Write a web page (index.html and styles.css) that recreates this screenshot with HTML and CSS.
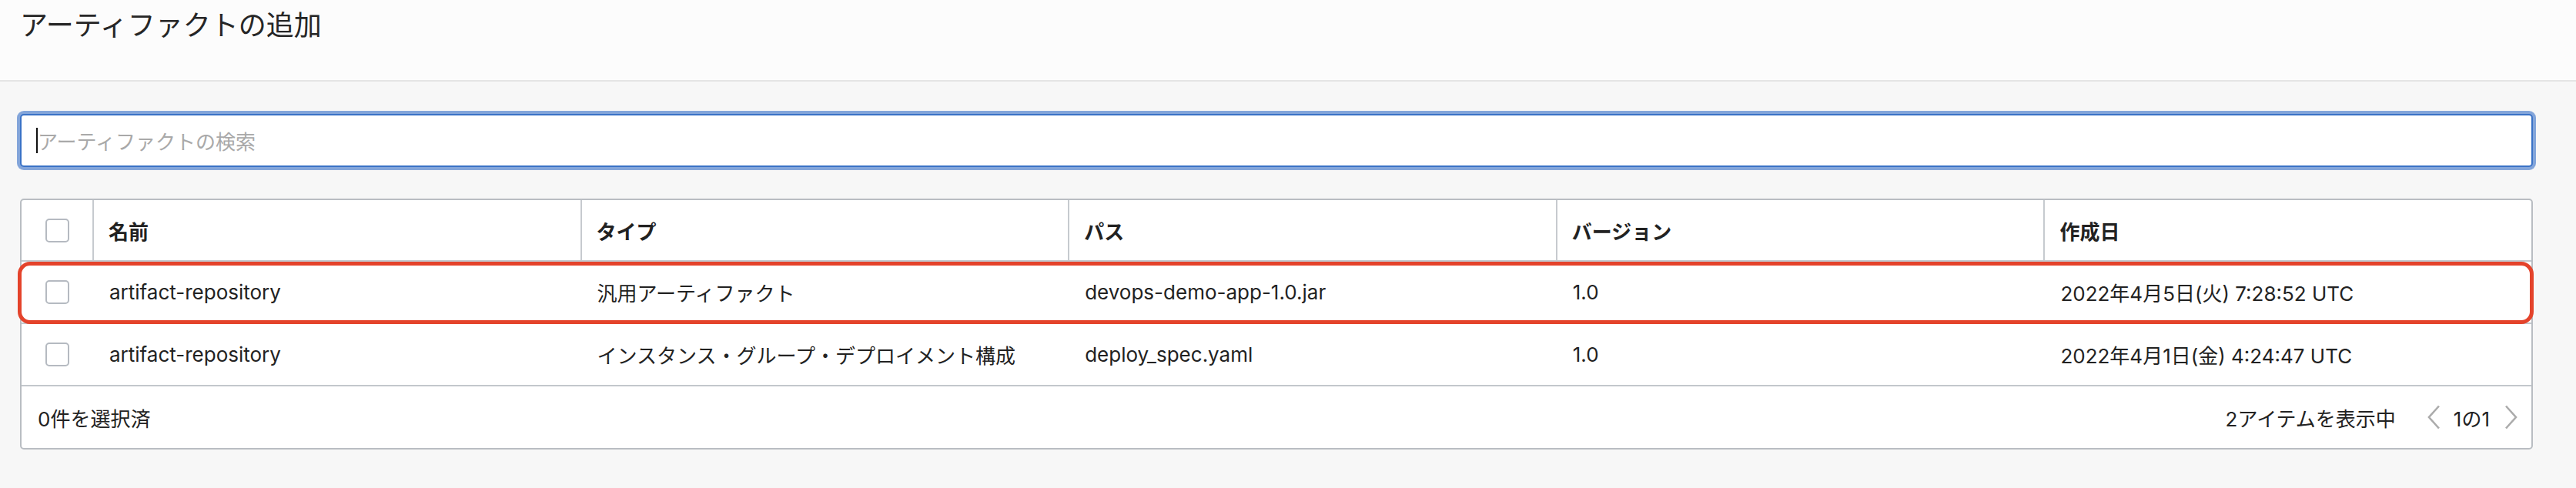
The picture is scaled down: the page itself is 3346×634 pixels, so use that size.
FILE: index.html
```html
<!DOCTYPE html>
<html lang="ja">
<head>
<meta charset="utf-8">
<title>アーティファクトの追加</title>
<link rel="stylesheet" href="styles.css">
</head>
<body>
<header class="page-header">
  <h1 class="page-title">アーティファクトの追加</h1>
</header>
<main class="content">
  <div class="search" role="searchbox">
    <span class="caret"></span><span class="placeholder">アーティファクトの検索</span>
  </div>
  <div class="table">
    <div class="row head">
      <div class="cell check"><span class="box"></span></div>
      <div class="cell th">名前</div>
      <div class="cell th">タイプ</div>
      <div class="cell th">パス</div>
      <div class="cell th">バージョン</div>
      <div class="cell th">作成日</div>
    </div>
    <div class="row body highlighted">
      <div class="cell check"><span class="box"></span></div>
      <div class="cell">artifact-repository</div>
      <div class="cell">汎用アーティファクト</div>
      <div class="cell">devops-demo-app-1.0.jar</div>
      <div class="cell">1.0</div>
      <div class="cell">2022年4月5日(火) 7:28:52 UTC</div>
      <span class="mark"></span>
    </div>
    <div class="row body">
      <div class="cell check"><span class="box"></span></div>
      <div class="cell">artifact-repository</div>
      <div class="cell">インスタンス・グループ・デプロイメント構成</div>
      <div class="cell">deploy_spec.yaml</div>
      <div class="cell">1.0</div>
      <div class="cell">2022年4月1日(金) 4:24:47 UTC</div>
    </div>
    <div class="footer">
      <span class="selected">0件を選択済</span>
      <div class="pager">
        <span class="count">2アイテムを表示中</span>
        <svg class="chev prev" width="18" height="32" viewBox="0 0 18 32"><polyline points="16,1.5 3,16 16,30.5" fill="none" stroke="#ababab" stroke-width="2.6" stroke-linejoin="miter"/></svg>
        <span class="pages">1の1</span>
        <svg class="chev next" width="18" height="32" viewBox="0 0 18 32"><polyline points="2,1.5 15,16 2,30.5" fill="none" stroke="#ababab" stroke-width="2.6" stroke-linejoin="miter"/></svg>
      </div>
    </div>
  </div>
</main>
</body>
</html>
```
FILE: styles.css
```css
* { box-sizing: border-box; }

html, body {
  margin: 0;
  padding: 0;
}

body {
  width: 3346px;
  height: 634px;
  background: #f7f7f7;
  font-family: Inter, "Noto Sans CJK JP", sans-serif;
  color: #222222;
  overflow: hidden;
}

.page-header {
  height: 106px;
  background: #fcfcfc;
  border-bottom: 2px solid #e5e5e5;
  padding: 15px 26px 0;
}

.page-title {
  margin: 0;
  font-size: 36px;
  line-height: 36px;
  font-weight: 400;
  color: #262626;
}

.content {
  padding: 42px 56px 0 26px;
}

.search {
  height: 69px;
  background: #ffffff;
  border: 2px solid #3a72c6;
  border-radius: 5px;
  box-shadow: 0 0 0 4px rgba(60, 115, 200, 0.62);
  display: flex;
  align-items: center;
  padding-left: 19px;
}

.caret {
  width: 2px;
  height: 33px;
  background: #111111;
}

.placeholder {
  font-size: 26px;
  color: #a9a9a9;
}

.table {
  margin-top: 41px;
  background: #ffffff;
  border: 2px solid #b9bdc2;
  border-radius: 5px;
}

.row {
  display: grid;
  grid-template-columns: 92px repeat(5, 1fr);
  border-bottom: 2px solid #c3c7cc;
  position: relative;
}

.row.head { height: 80px; }
.row.body { height: 81px; }

.cell {
  display: flex;
  align-items: center;
  padding-left: 22px;
  font-size: 26px;
  white-space: nowrap;
}

.cell.check {
  padding-left: 0;
  justify-content: center;
}

.cell.th {
  font-weight: 700;
  border-left: 2px solid #c6cacf;
  padding-left: 19px;
}

.box {
  width: 31px;
  height: 31px;
  border: 2px solid #b5bac1;
  border-radius: 5px;
  background: #ffffff;
}

.mark {
  position: absolute;
  left: -5px;
  right: -3px;
  top: 0;
  bottom: -2px;
  border: 5px solid #e4432b;
  border-radius: 16px;
  pointer-events: none;
}

.footer {
  height: 80px;
  display: flex;
  align-items: center;
  justify-content: space-between;
  padding: 0 17px 0 21px;
  font-size: 26px;
}

.pager {
  display: flex;
  align-items: center;
}

.count { margin-right: 40px; }

.pages { margin: 0 19px 0 17px; }

.chev { display: block; }
```
